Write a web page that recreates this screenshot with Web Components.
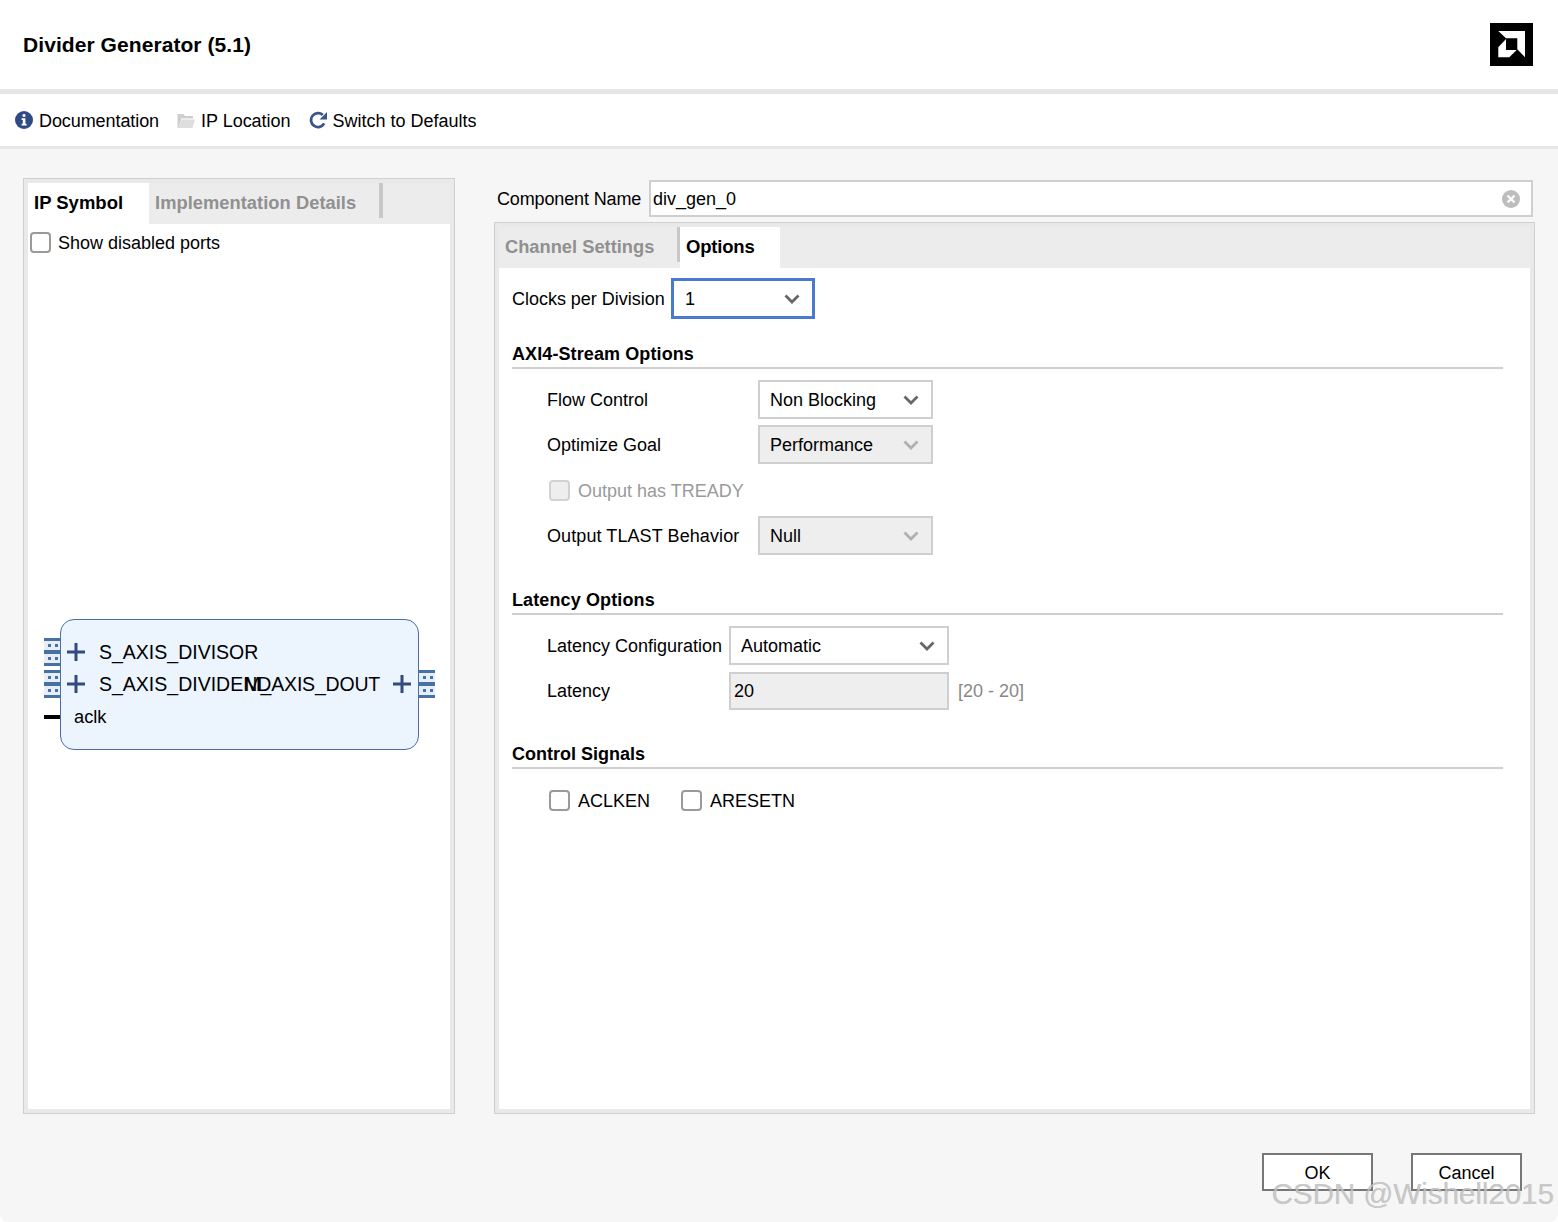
<!DOCTYPE html>
<html>
<head>
<meta charset="utf-8">
<title>Divider Generator</title>
<style>
html, body { margin: 0; background: #fff; }
body { font: 18px "Liberation Sans", Arial, sans-serif; color: #000; }
</style>
</head>
<body>
<ip-dialog>
  <ip-header slot="header" title="Divider Generator (5.1)"></ip-header>
  <ip-toolbar slot="toolbar">
    <tool-item icon="info" style="letter-spacing:-.08px">Documentation</tool-item>
    <tool-item icon="folder" style="letter-spacing:-.02px">IP Location</tool-item>
    <tool-item icon="refresh">Switch to Defaults</tool-item>
  </ip-toolbar>

  <tab-panel slot="left" style="height:936px">
    <tab-item slot="tabs" active style="width:121px">IP Symbol</tab-item>
    <tab-item slot="tabs" style="width:230px;letter-spacing:.05px">Implementation Details</tab-item>
    <tab-sep slot="tabs"></tab-sep>
    <ui-check style="margin:7px 0 0 2px">Show disabled ports</ui-check>
    <ip-symbol></ip-symbol>
  </tab-panel>

  <name-field slot="right" label="Component Name" value="div_gen_0"></name-field>
  <tab-panel slot="right" style="height:892px;margin-top:5px">
    <tab-item slot="tabs" style="width:178px">Channel Settings</tab-item>
    <tab-sep slot="tabs" thin></tab-sep>
    <tab-item slot="tabs" active style="width:100px;letter-spacing:-.2px">Options</tab-item>
    <options-page></options-page>
  </tab-panel>

  <push-button slot="actions">OK</push-button>
  <push-button slot="actions">Cancel</push-button>
</ip-dialog>
<water-mark>CSDN @Wishell2015</water-mark>

<script>
function define (name, html) {
  const template = document.createElement('template')
  template.innerHTML = html
  customElements.define(name, class extends HTMLElement {
    constructor () {
      super()
      this.attachShadow({ mode: 'open' })
      this.shadowRoot.appendChild(template.content.cloneNode(true))
    }
  })
}

const chevron = '<svg width="16" height="10" viewBox="0 0 16 10"><path d="M1.5 1.5L8 8l6.500-6.500" fill="none" stroke="currentColor" stroke-width="2.800"/></svg>'

define('ip-dialog', `
<style>
:host { display: block; position: relative; height: 1222px; background: #f6f6f6; border-radius: 0 0 8px 8px; overflow: hidden; }
.body { display: flex; gap: 39px; padding: 29px 23px 0; }
.left { width: 432px; flex: none; }
.right { flex: 1; min-width: 0; padding-top: 2px; }
.actions { display: flex; justify-content: flex-end; gap: 38px; padding: 39px 36px 0 0; }
</style>
<slot name="header"></slot>
<slot name="toolbar"></slot>
<div class="body">
  <div class="left"><slot name="left"></slot></div>
  <div class="right"><slot name="right"></slot></div>
</div>
<div class="actions"><slot name="actions"></slot></div>
`)

class IpHeader extends HTMLElement {
  constructor () {
    super()
    this.attachShadow({ mode: 'open' }).innerHTML = `
<style>
:host { display: flex; align-items: center; justify-content: space-between; height: 89px; padding: 0 25px 0 23px; background: #fff; border-bottom: 5px solid #e6e6e6; }
.title { font-weight: bold; font-size: 21px; letter-spacing: .07px; }
svg { display: block; }
</style>
<span class="title">${this.getAttribute('title')}</span>
<svg width="43" height="43" viewBox="0 0 43 43">
  <rect width="43" height="43" fill="#000"/>
  <path d="M8.300 8H35V34.300L27.300 26.300V15.300H16Z" fill="#fff"/>
  <path d="M16 16L8.300 24.300V34.300H19.300L26.700 27H16Z" fill="#fff"/>
</svg>`
  }
}
customElements.define('ip-header', IpHeader)

define('ip-toolbar', `
<style>
:host { display: flex; align-items: center; gap: 18px; height: 52px; padding-left: 15px; background: #fff; border-bottom: 3px solid #e6e6e6; }
</style>
<slot></slot>
`)

const toolIcons = {
  info: '<svg width="18" height="18" viewBox="0 0 18 18"><circle cx="9" cy="9" r="9" fill="#2f4a85"/><rect x="7.600" y="3.200" width="2.800" height="2.600" fill="#fff"/><path d="M6.600 7.200H10.400V12.800H11.600V14.600H6.600V12.800H7.800V9H6.600Z" fill="#fff"/></svg>',
  folder: '<svg width="18" height="18" viewBox="0 0 18 18"><path d="M0.500 17V3H6.500L8 5H16V7.500H4.500L1.500 17Z" fill="#cfcfcf"/><path d="M1.500 17L4.800 8.500H18L15.500 17Z" fill="#dedede"/></svg>',
  refresh: '<svg width="18" height="18" viewBox="0 0 18 18"><path d="M15.200 12.400A7 7 0 1 1 13.800 3.900" fill="none" stroke="#3a5688" stroke-width="2.800"/><path d="M18 1V8.600H10.600Z" fill="#3a5688"/></svg>'
}

class ToolItem extends HTMLElement {
  constructor () {
    super()
    this.attachShadow({ mode: 'open' }).innerHTML = `
<style>
:host { display: inline-flex; align-items: center; gap: 6px; }
svg { display: block; }
span { padding-top: 2px; }
</style>
${toolIcons[this.getAttribute('icon')]}<span><slot></slot></span>`
  }
}
customElements.define('tool-item', ToolItem)

define('tab-panel', `
<style>
:host { display: flex; flex-direction: column; box-sizing: border-box; border: 1px solid #cfcfcf; padding: 4px; background: #e9e9e9; }
.tabs { display: flex; height: 41px; flex: none; background: #ececec; }
.page { flex: 1; background: #fff; min-height: 0; position: relative; }
</style>
<div class="tabs"><slot name="tabs"></slot></div>
<div class="page"><slot></slot></div>
`)

class TabItem extends HTMLElement {
  constructor () {
    super()
    this.attachShadow({ mode: 'open' }).innerHTML = `
<style>
:host { display: block; box-sizing: border-box; padding: 9px 0 0 6px; height: 41px; font-weight: bold; font-size: 18.300px; color: #909090; background: #ececec; white-space: nowrap; }
:host([active]) { color: #000; background: #fff; font-size: 18.500px; }
</style>
<slot></slot>`
  }
}
customElements.define('tab-item', TabItem)

define('tab-sep', `
<style>
:host { display: block; width: 4px; height: 35px; background: #c8c8c8; }
:host([thin]) { width: 3px; }
</style>
`)

define('ui-check', `
<style>
:host { display: inline-flex; align-items: center; gap: var(--check-gap, 7px); height: 22px; }
i { display: block; box-sizing: border-box; width: 21px; height: 21px; border: 2px solid #9a9a9a; border-radius: 4px; background: #fff; }
span { padding-top: 2px; }
:host([disabled]) { color: #9a9a9a; }
:host([disabled]) i { border-color: #d2d2d2; background: #eee; }
</style>
<i></i><span><slot></slot></span>
`)

class UiSelect extends HTMLElement {
  constructor () {
    super()
    this.attachShadow({ mode: 'open' }).innerHTML = `
<style>
:host { display: flex; align-items: center; justify-content: space-between; box-sizing: border-box; width: 175px; height: 39px; padding: 0 12px 0 10px; border: 2px solid #cfcfcf; background: #fff; color: #000; }
:host([disabled]) { background: #eee; }
:host([focused]) { border: 3px solid #4a7acb; height: 41px; padding-left: 11px; }
.t { padding-top: 2px; }
.c { display: flex; color: #666; }
:host([disabled]) .c { color: #b0b0b0; }
</style>
<span class="t"><slot></slot></span><span class="c">${chevron}</span>`
  }
}
customElements.define('ui-select', UiSelect)

define('section-title', `
<style>
:host { display: block; box-sizing: border-box; height: 27px; font-weight: bold; font-size: 18px; line-height: 24px; border-bottom: 2px solid #cfcfcf; }
</style>
<slot></slot>
`)

define('form-row', `
<style>
:host { display: flex; align-items: center; height: 39px; margin-top: 6px; padding-left: 35px; }
.label { flex: none; width: var(--label, 211px); padding-top: 2px; }
</style>
<div class="label"><slot name="label"></slot></div>
<slot></slot>
`)

class NameField extends HTMLElement {
  constructor () {
    super()
    this.attachShadow({ mode: 'open' }).innerHTML = `
<style>
:host { display: flex; align-items: center; gap: 8px; height: 37px; margin-left: 3px; margin-right: 2px; }
.name { flex: none; width: 144px; padding-top: 2px; letter-spacing: -.14px; white-space: nowrap; }
.box { flex: 1; display: flex; align-items: center; justify-content: space-between; box-sizing: border-box; height: 37px; padding: 0 11px 0 2px; border: 2px solid #cfcfcf; background: #fff; }
.val { padding-top: 2px; }
svg { display: block; }
</style>
<span class="name">${this.getAttribute('label')}</span>
<div class="box">
  <span class="val">${this.getAttribute('value')}</span>
  <svg width="18" height="18" viewBox="0 0 18 18"><circle cx="9" cy="9" r="9" fill="#bdbdbd"/><path d="M5.500 5.500L12.500 12.500M12.500 5.500L5.500 12.500" stroke="#fff" stroke-width="2.400"/></svg>
</div>`
  }
}
customElements.define('name-field', NameField)

define('options-page', `
<style>
:host { display: block; padding: 10px 27px 0 13px; --check-gap: 8px; }
.top { display: flex; align-items: center; }
.top .cap { width: 159px; padding-top: 2px; letter-spacing: -.02px; white-space: nowrap; }
.top ui-select { width: 144px; }
section-title { margin-top: 33px; letter-spacing: .12px; }
section-title.first { margin-top: 23px; letter-spacing: .1px; }
.rows { padding-top: 5px; }
.tr { --label: 0; height: 40px; padding-left: 37px; }
.checks { display: flex; align-items: center; gap: 31px; height: 40px; margin-top: 11px; padding-left: 37px; }
.lat { --label: 182px; }
.lat ui-select { width: 220px; }
.input { box-sizing: border-box; width: 220px; height: 38px; padding: 7px 3px 0; border: 2px solid #cfcfcf; background: #eee; }
.range { margin-left: 9px; padding-top: 2px; color: #888; }
.wide { letter-spacing: .09px; }
</style>
<div class="top"><span class="cap">Clocks per Division</span><ui-select focused>1</ui-select></div>
<section-title class="first">AXI4-Stream Options</section-title>
<div class="rows">
  <form-row><span slot="label">Flow Control</span><ui-select>Non Blocking</ui-select></form-row>
  <form-row><span slot="label">Optimize Goal</span><ui-select disabled>Performance</ui-select></form-row>
  <form-row class="tr"><ui-check disabled>Output has TREADY</ui-check></form-row>
  <form-row><span slot="label" class="wide">Output TLAST Behavior</span><ui-select disabled>Null</ui-select></form-row>
</div>
<section-title>Latency Options</section-title>
<div class="rows lat">
  <form-row><span slot="label">Latency Configuration</span><ui-select>Automatic</ui-select></form-row>
  <form-row><span slot="label">Latency</span><div class="input">20</div><span class="range">[20 - 20]</span></form-row>
</div>
<section-title style="margin-top:32px;letter-spacing:0">Control Signals</section-title>
<div class="checks"><ui-check>ACLKEN</ui-check><ui-check>ARESETN</ui-check></div>
`)

// diagram: pins sit on a free canvas, so these are absolute
const bus = '#4472a6'
const dots = y => `<rect x="4" y="${y}" width="3" height="3" fill="${bus}"/><rect x="11" y="${y}" width="3" height="3" fill="${bus}"/>`
const busPin = `<svg width="16" height="28" viewBox="0 0 16 28"><rect width="16" height="28" fill="#e8eef7"/><rect width="16" height="3" fill="${bus}"/><rect y="12" width="16" height="4" fill="${bus}"/><rect y="25" width="16" height="3" fill="${bus}"/>${dots(6)}${dots(19)}</svg>`
const plus = '<svg width="18" height="18" viewBox="0 0 18 18"><path d="M0 9H18M9 0V18" stroke="#34497f" stroke-width="3"/></svg>'

define('ip-symbol', `
<style>
:host { display: block; position: absolute; left: 16px; top: 395px; width: 391px; height: 132px; font-size: 19.500px; line-height: 24px; }
.box { position: absolute; left: 16px; top: 0; box-sizing: border-box; width: 359px; height: 131px; border: 1px solid #4a6ea9; border-radius: 14px; background: #ecf4fe; }
.a { position: absolute; white-space: nowrap; }
svg { display: block; }
</style>
<div class="box"></div>
<div class="a" style="left:0;top:19px">${busPin}</div>
<div class="a" style="left:0;top:51px">${busPin}</div>
<div class="a" style="left:375px;top:51px">${busPin}</div>
<div class="a" style="left:0;top:96px;width:16px;height:4px;background:#000"></div>
<div class="a" style="left:23px;top:24px">${plus}</div>
<div class="a" style="left:23px;top:56px">${plus}</div>
<div class="a" style="left:349px;top:56px">${plus}</div>
<div class="a" style="left:55px;top:21px">S_AXIS_DIVISOR</div>
<div class="a" style="left:55px;top:53px">S_AXIS_DIVIDEND</div>
<div class="a" style="right:55px;top:53px;letter-spacing:-.2px">M_AXIS_DOUT</div>
<div class="a" style="left:30px;top:86px;font-size:18.300px">aclk</div>
`)

define('push-button', `
<style>
:host { display: flex; align-items: center; justify-content: center; box-sizing: border-box; width: 111px; height: 38px; padding-top: 2px; border: 2px solid #777; background: #fff; }
</style>
<slot></slot>
`)

define('water-mark', `
<style>
:host { display: block; position: absolute; left: 1272px; top: 1176px; font-size: 29.500px; line-height: 36px; white-space: nowrap; color: rgba(205,205,205,.72); text-shadow: -.5px -.5px .5px rgba(130,130,130,.5); pointer-events: none; }
</style>
<slot></slot>
`)
</script>
</body>
</html>
